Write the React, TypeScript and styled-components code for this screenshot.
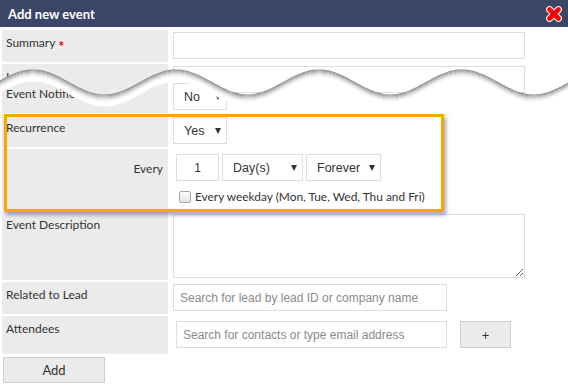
import React from 'react'
import styled, { createGlobalStyle } from 'styled-components'

// Wave cut (page coordinates, cut section starts at y=64, x=2)
const WAVE_W = 568
const waveY = (x: number) => 18.5 - 12.5 * Math.cos((2 * Math.PI * (x - 33)) / 143)
const wavePoints = (offset: number) => {
  const pts: string[] = []
  for (let x = -4; x <= WAVE_W + 4; x += 2) pts.push(`${x},${(waveY(x) + offset).toFixed(2)}`)
  return pts
}

const locationClip = (() => {
  const pts = ['0px 0px', '566px 0px']
  for (let x = WAVE_W; x >= 0; x -= 2) pts.push(`${x - 2}px ${(waveY(x) + 6).toFixed(2)}px`)
  return `polygon(${pts.join(', ')})`
})()

const SHADES = ['#929292', '#a4a4a4', '#b8b8b8', '#cbcbcb', '#dcdcdc', '#eaeaea', '#f5f5f5']

// Global
const GlobalStyle = createGlobalStyle`
  html, body {
    margin: 0;
    padding: 0;
    background: #fff;
  }
  body {
    font-family: Lato, 'Liberation Sans', sans-serif;
    color: #333;
  }
`

const Dialog = styled.div`
  width: 568px;
  height: 386px;
  overflow: hidden;
  background: #fff;
`

const Header = styled.div`
  height: 27px;
  box-sizing: border-box;
  background: #3b4566;
  display: flex;
  align-items: center;
  justify-content: space-between;
  padding: 0 6px 0 8px;
`

const Title = styled.h1`
  margin: 0;
  font: 700 13px Lato, sans-serif;
  color: #fff;
`

const CloseButton = styled.button`
  border: 0;
  padding: 0;
  background: none;
  width: 16px;
  height: 16px;
  display: flex;
`

const Form = styled.div`
  display: flex;
  flex-direction: column;
  gap: 2px;
  padding: 3px 2px 0;
`

const Row = styled.div<{ $height?: number }>`
  display: grid;
  grid-template-columns: 166px 1fr;
  column-gap: 5px;
  height: ${(p) => p.$height ?? 32}px;
`

const Label = styled.div<{ $right?: boolean; $top?: number }>`
  background: #ebebeb;
  font-size: 12px;
  color: #333;
  white-space: nowrap;
  overflow: hidden;
  padding: ${(p) => p.$top ?? 5}px 5px 0 4px;
  text-align: ${(p) => (p.$right ? 'right' : 'left')};
`

const Required = styled.span`
  display: inline-block;
  color: #e01010;
  font: 700 12px 'DejaVu Sans', sans-serif;
  margin-left: 3px;
  transform: translateY(3px) scale(0.8);
`

const Field = styled.div<{ $top?: number; $left?: number }>`
  background: #fff;
  padding: ${(p) => p.$top ?? 2}px 0 0 ${(p) => p.$left ?? 0}px;
  display: flex;
  flex-direction: column;
  align-items: flex-start;
`

const Inline = styled.div`
  display: flex;
  gap: 3px;
  align-items: center;
`

const TextInput = styled.input<{ $width: number; $center?: boolean }>`
  box-sizing: border-box;
  width: ${(p) => p.$width}px;
  height: 27px;
  border: 1px solid #dedede;
  background: transparent;
  padding: 0 6px;
  font: 12px 'Liberation Sans', Arial, sans-serif;
  color: #333;
  text-align: ${(p) => (p.$center ? 'center' : 'left')};
  outline: none;
  &::placeholder {
    color: #8a8a8a;
  }
`

const TextArea = styled.textarea`
  box-sizing: border-box;
  width: 352px;
  height: 64px;
  border: 1px solid #dedede;
  resize: both;
  outline: none;
`

const Select = styled.div<{ $width: number }>`
  box-sizing: border-box;
  width: ${(p) => p.$width}px;
  height: 27px;
  border: 1px solid #dedede;
  display: flex;
  align-items: center;
  justify-content: space-between;
  padding: 0 5px 0 10px;
  font: 12.5px 'Liberation Sans', Arial, sans-serif;
  color: #333;
  background: #fff;
  &::after {
    content: '';
    border-left: 3px solid transparent;
    border-right: 3px solid transparent;
    border-top: 6px solid #333;
  }
`

const CheckLine = styled.label`
  display: flex;
  align-items: center;
  gap: 4px;
  margin: 8px 0 0 3px;
  font-size: 11.9px;
  color: #333;
`

const Check = styled.span`
  box-sizing: border-box;
  width: 12px;
  height: 12px;
  border: 1px solid #a6a6a6;
  border-radius: 2px;
  background: linear-gradient(#fdfdfd, #e4e4e4);
`

const GrayButton = styled.button<{ $width: number; $height: number }>`
  box-sizing: border-box;
  width: ${(p) => p.$width}px;
  height: ${(p) => p.$height}px;
  border: 1px solid #cfcfcf;
  background: #ebebeb;
  font: 13px Lato, sans-serif;
  color: #333;
  padding: 0;
`

const AttendeeLine = styled.div`
  display: flex;
  align-items: center;
  gap: 13px;
`

const AddButton = styled(GrayButton)`
  margin: 1px 0 0 1px;
`

// Cut (torn) section between Location and Event Notification
const CutSection = styled.div`
  position: relative;
  display: grid;
  height: 49px;
  & > * {
    grid-area: 1 / 1;
  }
`

const Layer = styled.div<{ $end?: boolean; $clip?: boolean }>`
  align-self: ${(p) => (p.$end ? 'end' : 'start')};
  ${(p) => (p.$clip ? `clip-path: ${locationClip};` : '')}
`

const WaveSvg = styled.svg`
  position: absolute;
  left: -2px;
  top: 0;
  overflow: visible;
  pointer-events: none;
`

// Highlight around recurrence
const RecurrenceGroup = styled.div`
  position: relative;
  display: flex;
  flex-direction: column;
  gap: 2px;
`

const Highlight = styled.div`
  position: absolute;
  top: -1px;
  left: 2px;
  width: 440px;
  height: 98px;
  box-sizing: border-box;
  border: 3px solid #f7a900;
  box-shadow: 2px 3px 4px rgba(0, 0, 0, 0.35);
  pointer-events: none;
`

const Wave = () => {
  const top = wavePoints(0)
  const band = [...top, ...wavePoints(11.5).reverse()].join(' ')
  return (
    <WaveSvg width={WAVE_W} height={49}>
      <polygon points={band} fill="#fff" />
      {SHADES.map((c, i) => (
        <polyline key={c} points={wavePoints(i).join(' ')} fill="none" stroke={c} strokeWidth={1.2} />
      ))}
    </WaveSvg>
  )
}

const CloseIcon = () => (
  <svg width="16" height="16" viewBox="0 0 16 16">
    <path d="M3.5 3.5 L12.5 12.5 M12.5 3.5 L3.5 12.5" stroke="#efefef" strokeWidth="7" strokeLinecap="round" />
    <path d="M3.5 3.5 L12.5 12.5 M12.5 3.5 L3.5 12.5" stroke="#f40000" strokeWidth="4.6" strokeLinecap="round" />
  </svg>
)

export default function App() {
  return (
    <>
      <GlobalStyle />
      <Dialog>
        <Header>
          <Title>Add new event</Title>
          <CloseButton aria-label="Close">
            <CloseIcon />
          </CloseButton>
        </Header>
        <Form>
          <Row>
            <Label>
              Summary<Required>*</Required>
            </Label>
            <Field>
              <TextInput $width={352} />
            </Field>
          </Row>

          <CutSection>
            <Layer $end>
              <Row>
                <Label>Event Notification</Label>
                <Field>
                  <Select $width={54}>No</Select>
                </Field>
              </Row>
            </Layer>
            <Layer $clip>
              <Row>
                <Label>Location</Label>
                <Field>
                  <TextInput $width={352} />
                </Field>
              </Row>
            </Layer>
            <Wave />
          </CutSection>

          <RecurrenceGroup>
            <Row>
              <Label>Recurrence</Label>
              <Field>
                <Select $width={54}>Yes</Select>
              </Field>
            </Row>
            <Row $height={61}>
              <Label $right $top={12}>
                Every
              </Label>
              <Field $top={5} $left={3}>
                <Inline>
                  <TextInput $width={43} $center defaultValue="1" />
                  <Select $width={81}>Day(s)</Select>
                  <Select $width={75}>Forever</Select>
                </Inline>
                <CheckLine>
                  <Check />
                  Every weekday (Mon, Tue, Wed, Thu and Fri)
                </CheckLine>
              </Field>
            </Row>
            <Highlight />
          </RecurrenceGroup>

          <Row $height={68}>
            <Label>Event Description</Label>
            <Field>
              <TextArea />
            </Field>
          </Row>

          <Row>
            <Label>Related to Lead</Label>
            <Field>
              <TextInput $width={274} placeholder="Search for lead by lead ID or company name" />
            </Field>
          </Row>

          <Row $height={38}>
            <Label>Attendees</Label>
            <Field $top={5} $left={3}>
              <AttendeeLine>
                <TextInput $width={271} placeholder="Search for contacts or type email address" />
                <GrayButton $width={51} $height={27}>
                  +
                </GrayButton>
              </AttendeeLine>
            </Field>
          </Row>

          <AddButton $width={102} $height={26}>
            Add
          </AddButton>
        </Form>
      </Dialog>
    </>
  )
}
